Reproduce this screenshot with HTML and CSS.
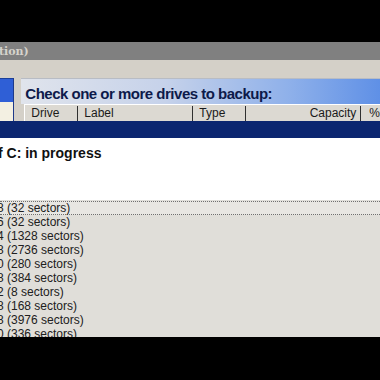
FILE: index.html
```html
<!DOCTYPE html>
<html>
<head>
<meta charset="utf-8">
<link rel="stylesheet" href="styles.css">
</head>
<body>
<div class="screen">
  <div class="black-top"></div>
  <div class="titlebar"><span class="title-text">tion)</span></div>
  <div class="band"></div>
  <div class="panel">
    <div class="side">
      <div class="side-blue"></div>
      <div class="side-cream"></div>
    </div>
    <div class="main">
      <div class="heading">Check one or more drives to backup:</div>
      <div class="colhead">
        <div class="col col-drive">Drive</div>
        <div class="col col-label">Label</div>
        <div class="col col-type">Type</div>
        <div class="col col-cap">Capacity</div>
        <div class="col col-pct">%</div>
      </div>
    </div>
  </div>
  <div class="navy"></div>
  <div class="status"><div class="status-text">f C: in progress</div></div>
  <div class="list">
    <div class="row focus">8 (32 sectors)</div>
    <div class="row">6 (32 sectors)</div>
    <div class="row">4 (1328 sectors)</div>
    <div class="row">8 (2736 sectors)</div>
    <div class="row">0 (280 sectors)</div>
    <div class="row">8 (384 sectors)</div>
    <div class="row">2 (8 sectors)</div>
    <div class="row">8 (168 sectors)</div>
    <div class="row">8 (3976 sectors)</div>
    <div class="row">0 (336 sectors)</div>
  </div>
  <div class="black-bottom"></div>
</div>
</body>
</html>
```

FILE: styles.css
```css
html, body {
  margin: 0;
  padding: 0;
  background: #000;
}
.screen {
  width: 380px;
  height: 380px;
  overflow: hidden;
  display: flex;
  flex-direction: column;
  font-family: "Liberation Sans", Arial, sans-serif;
}
.black-top {
  height: 42px;
  background: #000;
  flex: none;
}
.titlebar {
  height: 18px;
  flex: none;
  background: #808080;
  display: flex;
  align-items: center;
  overflow: hidden;
}
.title-text {
  margin-left: -1px;
  font-family: "DejaVu Serif", serif;
  font-weight: bold;
  font-size: 11px;
  color: #d6d3cc;
}
.band {
  height: 18px;
  flex: none;
  background: #d4d0c8;
}
.panel {
  height: 43px;
  flex: none;
  display: flex;
  gap: 7px;
  background: #d4d0c8;
}
.side {
  width: 15px;
  display: flex;
  flex-direction: column;
  border-right: 1px solid #1e3a8a;
  box-sizing: border-box;
}
.side-blue {
  height: 23px;
  background: #2f5fd6;
  border-top: 1px solid #1a3f9a;
}
.side-cream {
  flex: 1;
  background: #f3f0e2;
}
.main {
  flex: 1;
  display: flex;
  flex-direction: column;
}
.heading {
  height: 26px;
  box-sizing: border-box;
  padding-left: 4px;
  padding-top: 6px;
  background: linear-gradient(to right, #e0e4ec 0%, #c6d2ea 40%, #8eb0ea 75%, #5f90e6 100%);
  border-top: 1px solid #b8bcc4;
  color: #0d1a4a;
  font-weight: bold;
  font-size: 15px;
  letter-spacing: -0.5px;
  line-height: 17px;
  white-space: nowrap;
}
.colhead {
  flex: 1;
  margin-left: 3px;
  background: #dcd9d2;
  border-left: 1px solid #ffffff;
  border-top: 1px solid #ffffff;
  display: flex;
  align-items: flex-end;
  font-size: 12px;
  color: #1a1a1a;
  overflow: hidden;
}
.col {
  height: 15px;
  line-height: 15px;
  box-sizing: border-box;
  border-right: 1px solid #303030;
  padding-left: 6px;
  white-space: nowrap;
}
.col-drive { width: 53px; }
.col-label { width: 115px; }
.col-type { width: 53px; }
.col-cap { width: 115px; text-align: right; padding-right: 4px; }
.col-pct { border-right: none; padding-left: 8px; }
.navy {
  height: 17px;
  flex: none;
  background: #0b2670;
}
.status {
  height: 62px;
  flex: none;
  background: #ffffff;
}
.status-text {
  margin-left: -2px;
  padding-top: 7px;
  font-weight: bold;
  font-size: 14px;
  line-height: 16px;
  color: #111;
  white-space: nowrap;
}
.list {
  height: 137px;
  flex: none;
  box-sizing: border-box;
  padding-top: 1px;
  background: #e0ded9;
  overflow: hidden;
}
.row {
  height: 14px;
  line-height: 14px;
  margin-left: -3px;
  font-size: 12px;
  color: #202020;
  white-space: nowrap;
}
.row.focus {
  margin-left: 0;
  text-indent: -3px;
  background: #e8e6e2;
  border-top: 1px dotted #707070;
  border-bottom: 1px dotted #707070;
  line-height: 13px;
  box-sizing: border-box;
}
.black-bottom {
  flex: 1;
  background: #000;
}
```
